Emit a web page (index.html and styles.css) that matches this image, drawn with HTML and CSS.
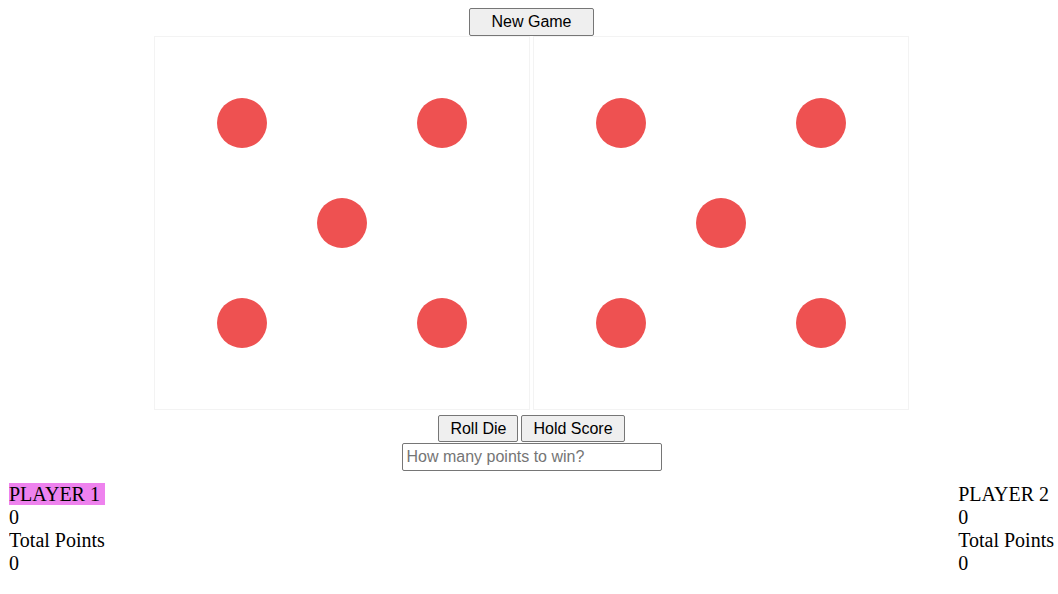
FILE: index.html
```html
<!DOCTYPE html>
<html>
<head>
<meta charset="utf-8">
<link rel="stylesheet" href="styles.css">
</head>
<body>
<div class="game">
  <div class="top-row">
    <button class="btn btn-new">New Game</button>
  </div>
  <div class="dice">
    <div class="die">
      <span class="dot r1 c1"></span>
      <span class="dot r1 c3"></span>
      <span class="dot r2 c2"></span>
      <span class="dot r3 c1"></span>
      <span class="dot r3 c3"></span>
    </div>
    <div class="die">
      <span class="dot r1 c1"></span>
      <span class="dot r1 c3"></span>
      <span class="dot r2 c2"></span>
      <span class="dot r3 c1"></span>
      <span class="dot r3 c3"></span>
    </div>
  </div>
  <div class="controls">
    <button class="btn btn-small">Roll Die</button>
    <button class="btn btn-small">Hold Score</button>
  </div>
  <div class="input-row">
    <input class="points" type="text" placeholder="How many points to win?">
  </div>
  <div class="players">
    <div class="player">
      <div><span class="name active">PLAYER 1</span></div>
      <div>0</div>
      <div>Total Points</div>
      <div>0</div>
    </div>
    <div class="player">
      <div><span class="name">PLAYER 2</span></div>
      <div>0</div>
      <div>Total Points</div>
      <div>0</div>
    </div>
  </div>
</div>
</body>
</html>
```
FILE: styles.css
```css
body {
  margin: 8px 4px 8px 9px;
  font-family: "Liberation Serif", "Times New Roman", serif;
  font-size: 16px;
  background: #fff;
  color: #000;
}
.top-row {
  display: flex;
  justify-content: center;
}
.btn {
  font-family: "Liberation Sans", Arial, sans-serif;
  font-size: 16px;
  color: #000;
  background: #efefef;
  border: 1px solid #767676;
  border-radius: 2px;
  margin: 0;
  box-sizing: border-box;
  line-height: 18px;
}
.btn-new {
  height: 28px;
  padding: 4px 21px;
}
.dice {
  display: flex;
  justify-content: center;
  gap: 4px;
}
.die {
  width: 374px;
  height: 372px;
  border: 1px solid #f3f3f3;
  display: grid;
  grid-template-columns: repeat(3, 100px);
  grid-template-rows: repeat(3, 100px);
  justify-content: center;
  align-content: center;
  margin-left: -1px;
}
.dot {
  width: 50px;
  height: 50px;
  border-radius: 50%;
  background: #ee5151;
  align-self: center;
  justify-self: center;
}
.r1 { grid-row: 1; }
.r2 { grid-row: 2; }
.r3 { grid-row: 3; }
.c1 { grid-column: 1; }
.c2 { grid-column: 2; }
.c3 { grid-column: 3; }
.controls {
  display: flex;
  justify-content: center;
  gap: 3px;
  margin-top: 5px;
}
.btn-small {
  height: 27px;
  padding: 3px 11px;
}
.input-row {
  display: flex;
  justify-content: center;
  margin-top: 1px;
}
.points {
  width: 260px;
  height: 28px;
  box-sizing: border-box;
  border: 1px solid #767676;
  border-radius: 2px;
  padding: 1px 4px;
  font-family: "Liberation Sans", Arial, sans-serif;
  font-size: 16px;
  margin: 0;
}
.points::placeholder {
  color: #757575;
}
.players {
  display: flex;
  justify-content: space-between;
  margin-top: 12px;
  font-size: 20px;
  line-height: 23px;
}
.name.active {
  background: violet;
  padding-right: 5px;
}
```
